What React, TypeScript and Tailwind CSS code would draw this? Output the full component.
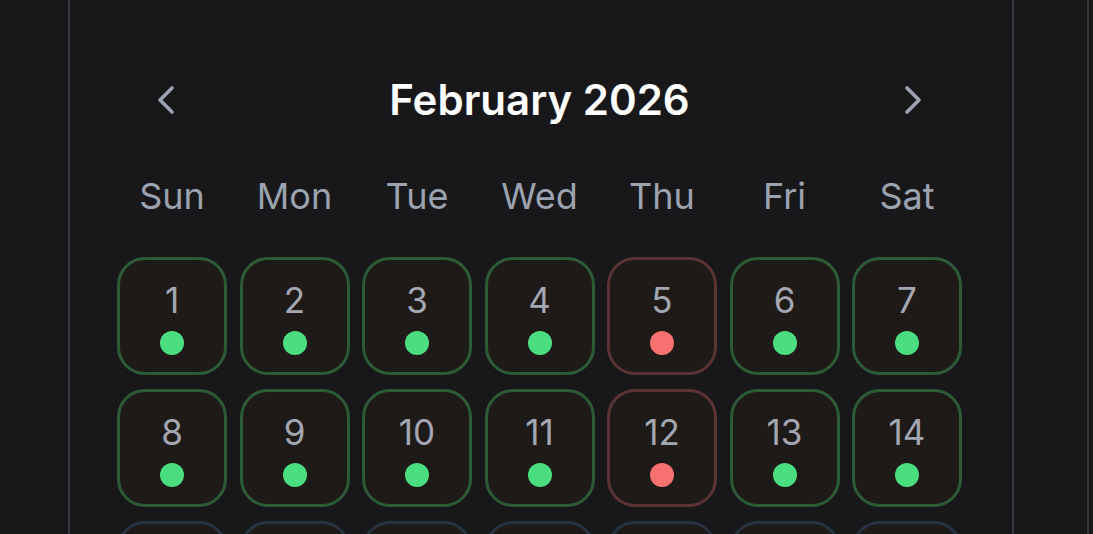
import { ChevronLeft, ChevronRight } from 'lucide-react'

type Status = 'good' | 'bad' | 'future'

const weekdays = ['Sun', 'Mon', 'Tue', 'Wed', 'Thu', 'Fri', 'Sat']

const days: { day: number; status: Status }[] = Array.from({ length: 28 }, (_, i) => {
  const day = i + 1
  if (day > 14) return { day, status: 'future' as Status }
  if (day === 5 || day === 12) return { day, status: 'bad' as Status }
  return { day, status: 'good' as Status }
})

const borderFor: Record<Status, string> = {
  good: 'border-[#2d5a37]',
  bad: 'border-[#5a3434]',
  future: 'border-[#283241]',
}

function DayCell({ day, status }: { day: number; status: Status }) {
  return (
    <div className={`h-[118px] rounded-[28px] border-[3px] bg-[#1e1a17] flex flex-col items-center pt-[20px] ${borderFor[status]}`}>
      <span className="text-[35px] leading-[40px] text-[#a4a7b1]">{day}</span>
      {status === 'good' && <span className="mt-[11px] w-6 h-6 rounded-full bg-[#4ade80]" />}
      {status === 'bad' && <span className="mt-[11px] w-6 h-6 rounded-full bg-[#f87171]" />}
    </div>
  )
}

export default function App() {
  return (
    <div className="h-screen overflow-hidden bg-[#18181b] flex" style={{ fontFamily: 'Inter, "Noto Sans", sans-serif' }}>
      <div className="w-[68px] shrink-0" />
      <div className="w-[946px] shrink-0 border-x-2 border-[#37373c] pt-[78px] pl-[47px] pr-[50px]">
        <div className="h-[44px] flex items-center justify-between px-[25px]">
          <button className="w-12 h-12 flex items-center justify-center text-[#9ca3af]">
            <ChevronLeft size={48} strokeWidth={1.8} />
          </button>
          <h1 className="text-[42px] leading-[44px] font-semibold text-white">February 2026</h1>
          <button className="w-12 h-12 flex items-center justify-center text-[#9ca3af]">
            <ChevronRight size={48} strokeWidth={1.8} />
          </button>
        </div>
        <div className="mt-[54px] grid grid-cols-7 gap-x-[12.5px]">
          {weekdays.map(w => (
            <div key={w} className="text-center text-[36px] leading-[40px] text-[#9ca3af]">{w}</div>
          ))}
        </div>
        <div className="mt-[41px] grid grid-cols-7 gap-x-[12.5px] gap-y-[14px]">
          {days.map(d => <DayCell key={d.day} day={d.day} status={d.status} />)}
        </div>
      </div>
      <div className="w-[73px] shrink-0" />
      <div className="flex-1 border-l-2 border-[#37373c]" />
    </div>
  )
}
